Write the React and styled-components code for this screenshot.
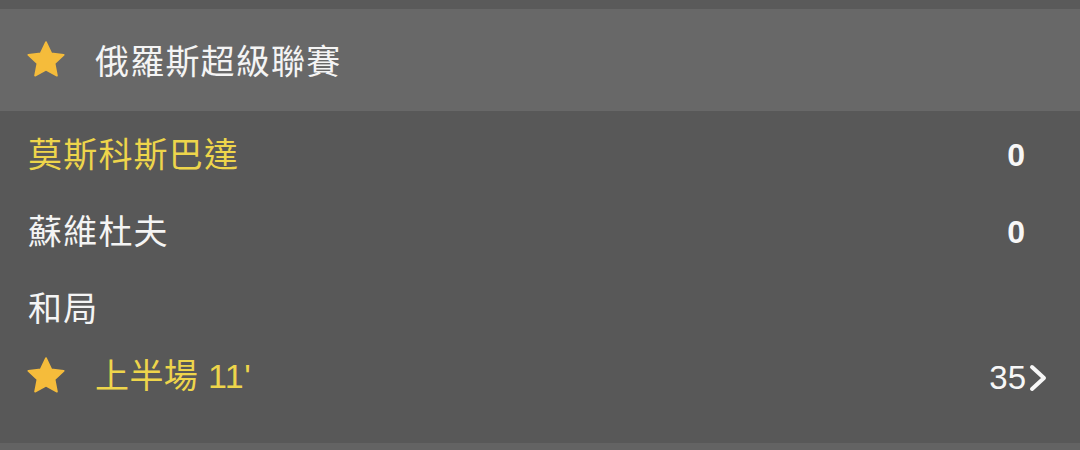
import React from "react";
import styled, { createGlobalStyle } from "styled-components";

const Global = createGlobalStyle`
  html, body { margin: 0; padding: 0; background: #5a5a5a; }
  body { font-family: "Liberation Sans", "Noto Sans CJK TC", sans-serif; }
`;

const Page = styled.div`
  width: 1080px;
  height: 450px;
  display: flex;
  flex-direction: column;
  background: #5a5a5a;
  overflow: hidden;
`;

const TopStrip = styled.div`
  height: 9px;
  background: #5a5a5a;
`;

const Header = styled.div`
  height: 102px;
  background: #686868;
  display: flex;
  align-items: center;
  padding-left: 25px;
  gap: 28px;
`;

const Title = styled.div`
  font-family: "Noto Sans CJK TC", sans-serif;
  font-size: 34px;
  letter-spacing: 1.2px;
  color: #f4f4f4;
  line-height: 1;
`;

const Body = styled.div`
  flex: 1;
  background: #585858;
  display: flex;
  flex-direction: column;
  padding-top: 3px;
`;

const Row = styled.div`
  height: ${(p) => p.$h || 77}px;
  display: flex;
  align-items: center;
  justify-content: space-between;
  padding: 0 32px 0 ${(p) => p.$pl || 28}px;
`;

const Name = styled.div`
  font-family: "Noto Sans CJK TC", sans-serif;
  font-size: 34px;
  letter-spacing: 1.2px;
  line-height: 1;
  color: ${(p) => (p.$hl ? "#eed54b" : "#f4f4f4")};
`;

const Score = styled.div`
  font-family: "Liberation Sans", sans-serif;
  font-weight: bold;
  font-size: 32px;
  line-height: 1;
  color: #f7f7f7;
  margin: 5px 23px 0 0;
`;

const Left = styled.div`
  display: flex;
  align-items: center;
  gap: 28px;
`;

const Status = styled.div`
  font-family: "Liberation Sans", "Noto Sans CJK TC", sans-serif;
  font-size: 34px;
  letter-spacing: 0.4px;
  color: #eed54b;
  line-height: 1;
`;

const Count = styled.div`
  display: flex;
  align-items: center;
  gap: 3px;
  margin-top: 3px;
  font-family: "Liberation Sans", sans-serif;
  font-size: 33px;
  line-height: 1;
  color: #f7f7f7;
`;

const BottomStrip = styled.div`
  height: 7px;
  background: #636363;
`;

const Star = () => (
  <svg width="42" height="42" viewBox="0 0 24 24">
    <path
      d="M12 1.8l3.05 6.45 7.05.85-5.2 4.85 1.35 7L12 17.5l-6.25 3.45 1.35-7-5.2-4.85 7.05-.85z"
      fill="#f5bc3b"
      stroke="#f5bc3b"
      strokeWidth="1"
      strokeLinejoin="round"
    />
  </svg>
);

const Chevron = () => (
  <svg width="19" height="28" viewBox="0 0 19 28">
    <path
      d="M3 3l12 11L3 25"
      fill="none"
      stroke="#f7f7f7"
      strokeWidth="4"
      strokeLinecap="round"
      strokeLinejoin="round"
    />
  </svg>
);

export default function App() {
  return (
    <Page>
      <Global />
      <TopStrip />
      <Header>
        <Star />
        <Title>俄羅斯超級聯賽</Title>
      </Header>
      <Body>
        <Row>
          <Name $hl>莫斯科斯巴達</Name>
          <Score>0</Score>
        </Row>
        <Row>
          <Name>蘇維杜夫</Name>
          <Score>0</Score>
        </Row>
        <Row>
          <Name>和局</Name>
        </Row>
        <Row $h={62} $pl={25}>
          <Left>
            <Star />
            <Status>上半場 11'</Status>
          </Left>
          <Count>
            35
            <Chevron />
          </Count>
        </Row>
      </Body>
      <BottomStrip />
    </Page>
  );
}
